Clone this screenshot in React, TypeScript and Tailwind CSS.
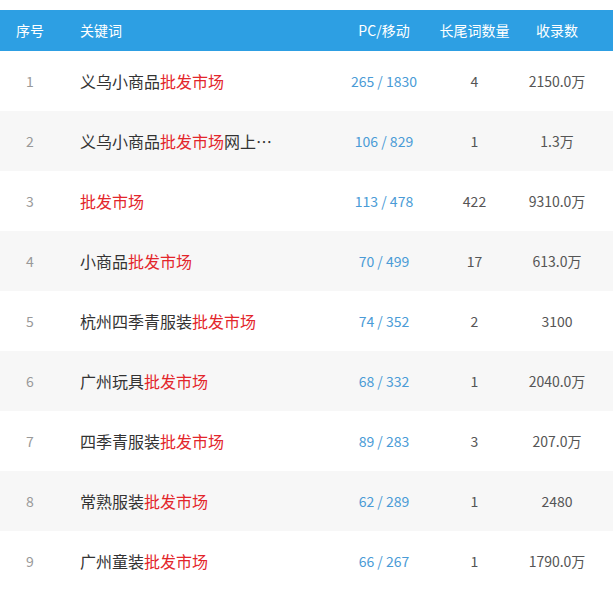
const rows: [string, string, string, string, string, string][] = [
  ["1", "义乌小商品", "批发市场", "", "265 / 1830", "4|2150.0万"],
  ["2", "义乌小商品", "批发市场", "网上", "106 / 829", "1|1.3万"],
  ["3", "", "批发市场", "", "113 / 478", "422|9310.0万"],
  ["4", "小商品", "批发市场", "", "70 / 499", "17|613.0万"],
  ["5", "杭州四季青服装", "批发市场", "", "74 / 352", "2|3100"],
  ["6", "广州玩具", "批发市场", "", "68 / 332", "1|2040.0万"],
  ["7", "四季青服装", "批发市场", "", "89 / 283", "3|207.0万"],
  ["8", "常熟服装", "批发市场", "", "62 / 289", "1|2480"],
  ["9", "广州童装", "批发市场", "", "66 / 267", "1|1790.0万"],
];

export default function App() {
  return (
    <div
      className="w-[613px] bg-white pt-[10px]"
      style={{ fontFamily: '"Microsoft YaHei", "Noto Sans CJK SC", sans-serif' }}
    >
      <div className="flex h-[41px] items-center bg-[#2d9fe3] text-[14px] text-white">
        <div className="w-[60px] text-center">序号</div>
        <div className="flex-1 pl-5">关键词</div>
        <div className="w-[110px] text-center">PC/移动</div>
        <div className="w-[71px] text-center">长尾词数量</div>
        <div className="w-[103px] pr-[9px] text-center">收录数</div>
      </div>
      {rows.map(([n, pre, hl, post, pc, rest], i) => {
        const [tail, count] = rest.split("|");
        return (
          <div
            key={n}
            className={`flex h-[60px] items-center text-[14px] ${i % 2 ? "bg-[#f7f7f7]" : "bg-white"}`}
          >
            <div className="w-[60px] text-center text-[#999]">{n}</div>
            <div className="flex-1 pl-5 text-[16px] text-[#333]">
              {pre}
              <span className="text-[#e3262b]">{hl}</span>
              {post}
              {post && "…"}
            </div>
            <div className="w-[110px] text-center text-[#4a9bd6]">{pc}</div>
            <div className="w-[71px] text-center text-[#555]">{tail}</div>
            <div className="w-[103px] pr-[9px] text-center text-[#555]">{count}</div>
          </div>
        );
      })}
    </div>
  );
}
